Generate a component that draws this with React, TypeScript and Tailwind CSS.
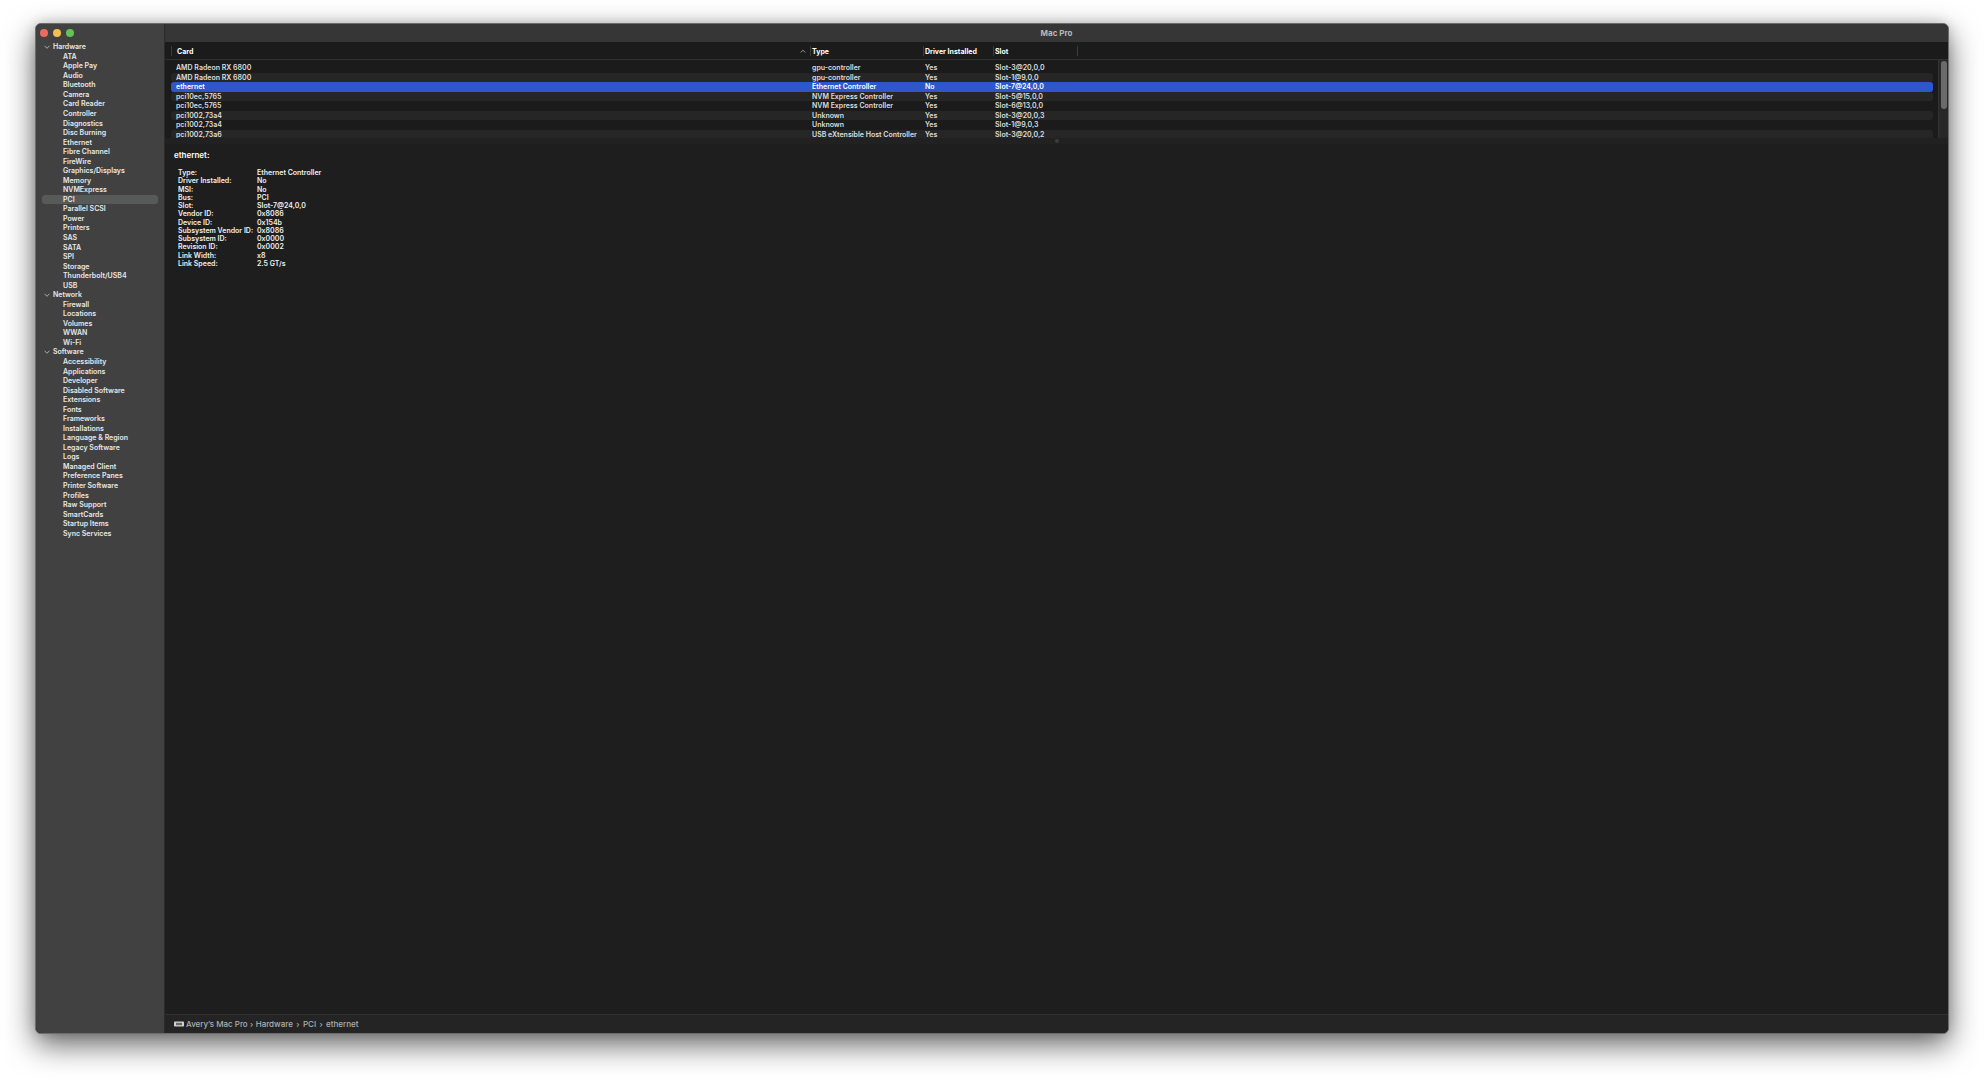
import { useState } from 'react';

const sections = [
  {
    title: 'Hardware',
    items: [
      'ATA', 'Apple Pay', 'Audio', 'Bluetooth', 'Camera', 'Card Reader', 'Controller', 'Diagnostics',
      'Disc Burning', 'Ethernet', 'Fibre Channel', 'FireWire', 'Graphics/Displays', 'Memory', 'NVMExpress',
      'PCI', 'Parallel SCSI', 'Power', 'Printers', 'SAS', 'SATA', 'SPI', 'Storage', 'Thunderbolt/USB4', 'USB',
    ],
  },
  {
    title: 'Network',
    items: ['Firewall', 'Locations', 'Volumes', 'WWAN', 'Wi-Fi'],
  },
  {
    title: 'Software',
    items: [
      'Accessibility', 'Applications', 'Developer', 'Disabled Software', 'Extensions', 'Fonts', 'Frameworks',
      'Installations', 'Language & Region', 'Legacy Software', 'Logs', 'Managed Client', 'Preference Panes',
      'Printer Software', 'Profiles', 'Raw Support', 'SmartCards', 'Startup Items', 'Sync Services',
    ],
  },
];

const cards = [
  ['AMD Radeon RX 6800', 'gpu-controller', 'Yes', 'Slot-3@20,0,0'],
  ['AMD Radeon RX 6800', 'gpu-controller', 'Yes', 'Slot-1@9,0,0'],
  ['ethernet', 'Ethernet Controller', 'No', 'Slot-7@24,0,0'],
  ['pci10ec,5765', 'NVM Express Controller', 'Yes', 'Slot-5@15,0,0'],
  ['pci10ec,5765', 'NVM Express Controller', 'Yes', 'Slot-6@13,0,0'],
  ['pci1002,73a4', 'Unknown', 'Yes', 'Slot-3@20,0,3'],
  ['pci1002,73a4', 'Unknown', 'Yes', 'Slot-1@9,0,3'],
  ['pci1002,73a6', 'USB eXtensible Host Controller', 'Yes', 'Slot-3@20,0,2'],
];

const details = [
  ['Type:', 'Ethernet Controller'],
  ['Driver Installed:', 'No'],
  ['MSI:', 'No'],
  ['Bus:', 'PCI'],
  ['Slot:', 'Slot-7@24,0,0'],
  ['Vendor ID:', '0x8086'],
  ['Device ID:', '0x154b'],
  ['Subsystem Vendor ID:', '0x8086'],
  ['Subsystem ID:', '0x0000'],
  ['Revision ID:', '0x0002'],
  ['Link Width:', 'x8'],
  ['Link Speed:', '2.5 GT/s'],
];

const columns = 'grid grid-cols-[639px_113px_70px_84px_1fr]';

const Sidebar = () => {
  const [active, setActive] = useState('PCI');

  return (
    <aside className="w-[129px] shrink-0 border-r border-[#2b2b2b] bg-[#414141]">
      <div className="flex h-[18px] items-center gap-[5px] pl-1">
        <button aria-label="Close" className="size-2 rounded-full bg-[#ed6a5e]" />
        <button aria-label="Minimize" className="size-2 rounded-full bg-[#f5be4f]" />
        <button aria-label="Zoom" className="size-2 rounded-full bg-[#61c554]" />
      </div>
      <nav className="grid h-[496px] auto-rows-fr px-[6px] text-[#e8e8e8]">
        {sections.map((section) => (
          <div key={section.title} className="contents">
            <button className="flex min-h-0 items-center gap-[3px] pl-[2px] text-left">
              <svg viewBox="0 0 6 6" className="size-[6px]" fill="none" stroke="#b5b5b5" strokeWidth="0.9" strokeLinecap="round" strokeLinejoin="round">
                <path d="M0.8 2 L3 4.3 L5.2 2" />
              </svg>
              {section.title}
            </button>
            {section.items.map((item) => (
              <button
                key={item}
                onClick={() => setActive(item)}
                className={`flex min-h-0 items-center rounded-[3px] pl-[21px] text-left ${active === item ? 'bg-[#585a59]' : ''}`}
              >
                {item}
              </button>
            ))}
          </div>
        ))}
      </nav>
    </aside>
  );
};

const CardTable = () => {
  const [selected, setSelected] = useState(2);

  return (
    <div className="relative h-24 shrink-0 overflow-hidden bg-[#1b1b1b]">
      <table className="block">
        <thead className="block h-[18px] border-b border-[#313131] text-white">
          <tr className={`${columns} ml-[6px] pt-1`}>
            <th className="flex h-[10px] items-center justify-between border-l border-[#3a3a3a] pr-1 pl-[5px] font-bold">
              Card
              <svg viewBox="0 0 6 6" className="size-[6px]" fill="none" stroke="#a8a8a8" strokeWidth="0.9" strokeLinecap="round" strokeLinejoin="round">
                <path d="M1 4.2 L3 2.2 L5 4.2" />
              </svg>
            </th>
            <th className="flex h-[10px] items-center border-l border-[#3a3a3a] pl-px font-bold">Type</th>
            <th className="flex h-[10px] items-center border-l border-[#3a3a3a] pl-px font-bold">Driver Installed</th>
            <th className="flex h-[10px] items-center border-l border-[#3a3a3a] pl-px font-bold">Slot</th>
            <td className="h-[10px] border-l border-[#3a3a3a]" />
          </tr>
        </thead>
        <tbody className="mt-[3px] mr-[15px] ml-[6px] grid h-[76px] auto-rows-fr text-[#dedede]">
          {cards.map((card, i) => (
            <tr
              key={i}
              onClick={() => setSelected(i)}
              className={`${columns} min-h-0 items-center rounded-[3px] ${selected === i ? 'bg-[#2e57cc] text-white' : i % 2 ? 'bg-[#262626]' : ''}`}
            >
              <td className="pl-[5px]">{card[0]}</td>
              <td className="pl-[2px]">{card[1]}</td>
              <td className="pl-[2px]">{card[2]}</td>
              <td className="pl-[2px]">{card[3]}</td>
            </tr>
          ))}
        </tbody>
      </table>
      <div className="absolute top-[18px] right-0 bottom-0 w-[10px] border-l border-[#333333] bg-[#282828] pt-px pl-[2px]">
        <div className="h-12 w-[6px] rounded-full bg-[#6b6b6b]" />
      </div>
    </div>
  );
};

const Details = () => (
  <section className="min-h-0 flex-1 bg-[#1e1e1e] text-[#f0f0f0]">
    <h2 className="pt-[6px] pl-[9px] text-[8px] leading-[10px] font-semibold text-white">ethernet:</h2>
    <dl className="mt-2 ml-[13px] grid h-[99px] auto-rows-fr">
      {details.map(([label, value]) => (
        <div key={label} className="grid min-h-0 grid-cols-[79px_1fr] items-center">
          <dt>{label}</dt>
          <dd>{value}</dd>
        </div>
      ))}
    </dl>
  </section>
);

const Breadcrumb = () => (
  <footer className="flex h-[19px] shrink-0 items-center border-t border-[#303030] bg-[#242424] pl-[9px] text-[8px] leading-[10px] font-medium text-[#b0b0b0]">
    <svg viewBox="0 0 10 6" className="mr-[2px] h-[6px] w-[10px]">
      <rect x="0" y="0.5" width="10" height="5" rx="0.8" fill="#d0d0d0" />
      <rect x="2" y="1.8" width="6" height="2.4" fill="#6a6a6a" />
    </svg>
    <span>Avery’s Mac Pro</span>
    <span className="w-2 text-center">›</span>
    <span>Hardware</span>
    <span className="w-[10px] text-center">›</span>
    <span>PCI</span>
    <span className="w-[10px] text-center">›</span>
    <span>ethernet</span>
  </footer>
);

const App = () => {
  return (
    <div className="flex h-screen bg-white px-[35px] pt-[23px] pb-[46px] font-['Inter',sans-serif] text-[7px] leading-[9px] font-semibold">
      <div className="flex min-w-0 flex-1 overflow-hidden rounded-md border border-[#6c6c6c] bg-[#1e1e1e] shadow-[0_11px_30px_rgba(0,0,0,0.6),0_0_12px_rgba(0,0,0,0.15)]">
        <Sidebar />
        <main className="flex min-w-0 flex-1 flex-col">
          <header className="flex h-[18px] shrink-0 items-center justify-center bg-[#363636]">
            <h1 className="text-[8px] leading-[10px] font-bold text-[#b9b9b9]">Mac Pro</h1>
          </header>
          <CardTable />
          <div className="flex h-[6px] shrink-0 items-center justify-center bg-[#212121]">
            <span className="size-1 rounded-full bg-[#3c3c3c]" />
          </div>
          <Details />
          <Breadcrumb />
        </main>
      </div>
    </div>
  );
};

export default App;
